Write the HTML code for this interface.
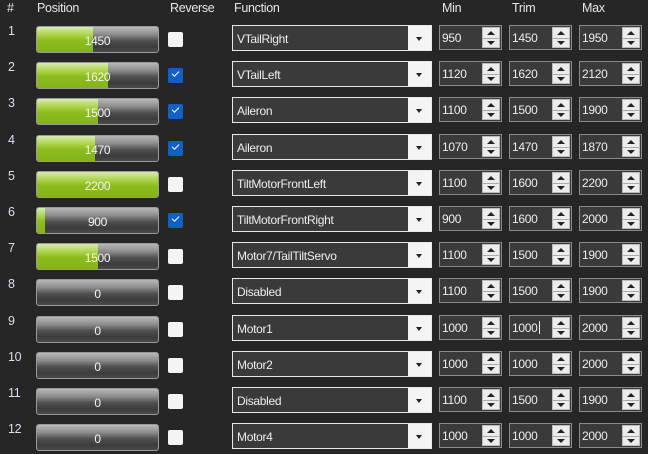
<!DOCTYPE html><html><head><style>
*{margin:0;padding:0;box-sizing:border-box}
body{width:648px;height:453px;background:#262626;font-family:"Liberation Sans",sans-serif;color:#e8e8e8;position:relative;overflow:hidden;letter-spacing:-0.3px}
.h{position:absolute;top:1px;font-size:12.5px;color:#e6e6e6}
.r{position:absolute;left:0;width:648px;height:30px}
.n{position:absolute;left:8px;top:-2px;font-size:12.5px;color:#dde}
.b{position:absolute;left:36px;top:0;width:123px;height:27px;border:1px solid #9a9a9a;border-radius:3px;background:linear-gradient(#b8b8b8,#8c8c8c 30%,#505050 55%,#3c3c3c 80%,#4a4a4a);overflow:hidden}
.f{position:absolute;left:0;top:0;bottom:0;background:linear-gradient(#d8eab0,#a8d040 35%,#8cbc1c 55%,#84b418)}
.bt{position:absolute;left:0;right:0;top:7px;text-align:center;font-size:12px;color:#f4f4f4}
.c{position:absolute;left:168px;top:6px;width:15px;height:15px;border-radius:2px;background:#f4f4f4}
.c.k{background:#1060c8}
.c.k:after{content:"";position:absolute;left:4px;top:3px;width:6px;height:3px;border-left:1.5px solid #fff;border-bottom:1.5px solid #fff;transform:rotate(-45deg)}
.d{position:absolute;left:232px;top:-1px;width:200px;height:26px;border:1px solid #e8e8e8;background:#3a3a3a}
.d span{position:absolute;left:4px;top:6px;font-size:12px;color:#eee}
.d i{position:absolute;right:0;top:0;bottom:0;width:23px;background:#f4f4f4}
.d i:after{content:"";position:absolute;left:8px;top:11px;border-left:3.5px solid transparent;border-right:3.5px solid transparent;border-top:4px solid #222}
.m{position:absolute;top:-1px;width:63px;height:25px;border:1px solid #8a8a8a;background:#3a3a3a}
.m span{position:absolute;left:2px;top:5px;font-size:12px;color:#eee}
.m i{position:absolute;right:1px;top:1px;bottom:1px;width:18px;background:#ececec;border:1px solid #bbb;background-image:linear-gradient(transparent 10px,#aaa 10px,#aaa 11px,transparent 11px)}
.m i:before{content:"";position:absolute;left:4px;top:3px;border-left:4px solid transparent;border-right:4px solid transparent;border-bottom:4px solid #222}
.m i:after{content:"";position:absolute;left:4px;top:13px;border-left:4px solid transparent;border-right:4px solid transparent;border-top:4px solid #222}
.m1{left:439px}.m2{left:509px}.m3{left:579px}
.cur{display:inline-block;width:1px;height:13px;background:#eee;vertical-align:-2px;margin-left:1px}
</style></head><body>
<div class="h" style="left:7px">#</div><div class="h" style="left:37px">Position</div><div class="h" style="left:170px">Reverse</div><div class="h" style="left:234px">Function</div><div class="h" style="left:442px">Min</div><div class="h" style="left:512px">Trim</div><div class="h" style="left:582px">Max</div>

<div class="r" style="top:26px"><div class="n">1</div><div class="b"><div class="f" style="width:46%"></div><div class="bt">1450</div></div><div class="c"></div><div class="d"><span>VTailRight</span><i></i></div><div class="m m1"><span>950</span><i></i></div><div class="m m2"><span>1450</span><i></i></div><div class="m m3"><span>1950</span><i></i></div></div>
<div class="r" style="top:62.2px"><div class="n">2</div><div class="b"><div class="f" style="width:58.6%"></div><div class="bt">1620</div></div><div class="c k"></div><div class="d"><span>VTailLeft</span><i></i></div><div class="m m1"><span>1120</span><i></i></div><div class="m m2"><span>1620</span><i></i></div><div class="m m3"><span>2120</span><i></i></div></div>
<div class="r" style="top:98.4px"><div class="n">3</div><div class="b"><div class="f" style="width:50%"></div><div class="bt">1500</div></div><div class="c k"></div><div class="d"><span>Aileron</span><i></i></div><div class="m m1"><span>1100</span><i></i></div><div class="m m2"><span>1500</span><i></i></div><div class="m m3"><span>1900</span><i></i></div></div>
<div class="r" style="top:134.6px"><div class="n">4</div><div class="b"><div class="f" style="width:47.9%"></div><div class="bt">1470</div></div><div class="c k"></div><div class="d"><span>Aileron</span><i></i></div><div class="m m1"><span>1070</span><i></i></div><div class="m m2"><span>1470</span><i></i></div><div class="m m3"><span>1870</span><i></i></div></div>
<div class="r" style="top:170.8px"><div class="n">5</div><div class="b"><div class="f" style="width:100%"></div><div class="bt">2200</div></div><div class="c"></div><div class="d"><span>TiltMotorFrontLeft</span><i></i></div><div class="m m1"><span>1100</span><i></i></div><div class="m m2"><span>1600</span><i></i></div><div class="m m3"><span>2200</span><i></i></div></div>
<div class="r" style="top:207px"><div class="n">6</div><div class="b"><div class="f" style="width:7%"></div><div class="bt">900</div></div><div class="c k"></div><div class="d"><span>TiltMotorFrontRight</span><i></i></div><div class="m m1"><span>900</span><i></i></div><div class="m m2"><span>1600</span><i></i></div><div class="m m3"><span>2000</span><i></i></div></div>
<div class="r" style="top:243.2px"><div class="n">7</div><div class="b"><div class="f" style="width:50%"></div><div class="bt">1500</div></div><div class="c"></div><div class="d"><span>Motor7/TailTiltServo</span><i></i></div><div class="m m1"><span>1100</span><i></i></div><div class="m m2"><span>1500</span><i></i></div><div class="m m3"><span>1900</span><i></i></div></div>
<div class="r" style="top:279.4px"><div class="n">8</div><div class="b"><div class="bt">0</div></div><div class="c"></div><div class="d"><span>Disabled</span><i></i></div><div class="m m1"><span>1100</span><i></i></div><div class="m m2"><span>1500</span><i></i></div><div class="m m3"><span>1900</span><i></i></div></div>
<div class="r" style="top:315.6px"><div class="n">9</div><div class="b"><div class="bt">0</div></div><div class="c"></div><div class="d"><span>Motor1</span><i></i></div><div class="m m1"><span>1000</span><i></i></div><div class="m m2"><span>1000<b class="cur"></b></span><i></i></div><div class="m m3"><span>2000</span><i></i></div></div>
<div class="r" style="top:351.8px"><div class="n">10</div><div class="b"><div class="bt">0</div></div><div class="c"></div><div class="d"><span>Motor2</span><i></i></div><div class="m m1"><span>1000</span><i></i></div><div class="m m2"><span>1000</span><i></i></div><div class="m m3"><span>2000</span><i></i></div></div>
<div class="r" style="top:388px"><div class="n">11</div><div class="b"><div class="bt">0</div></div><div class="c"></div><div class="d"><span>Disabled</span><i></i></div><div class="m m1"><span>1100</span><i></i></div><div class="m m2"><span>1500</span><i></i></div><div class="m m3"><span>1900</span><i></i></div></div>
<div class="r" style="top:424.2px"><div class="n">12</div><div class="b"><div class="bt">0</div></div><div class="c"></div><div class="d"><span>Motor4</span><i></i></div><div class="m m1"><span>1000</span><i></i></div><div class="m m2"><span>1000</span><i></i></div><div class="m m3"><span>2000</span><i></i></div></div>
</body></html>
